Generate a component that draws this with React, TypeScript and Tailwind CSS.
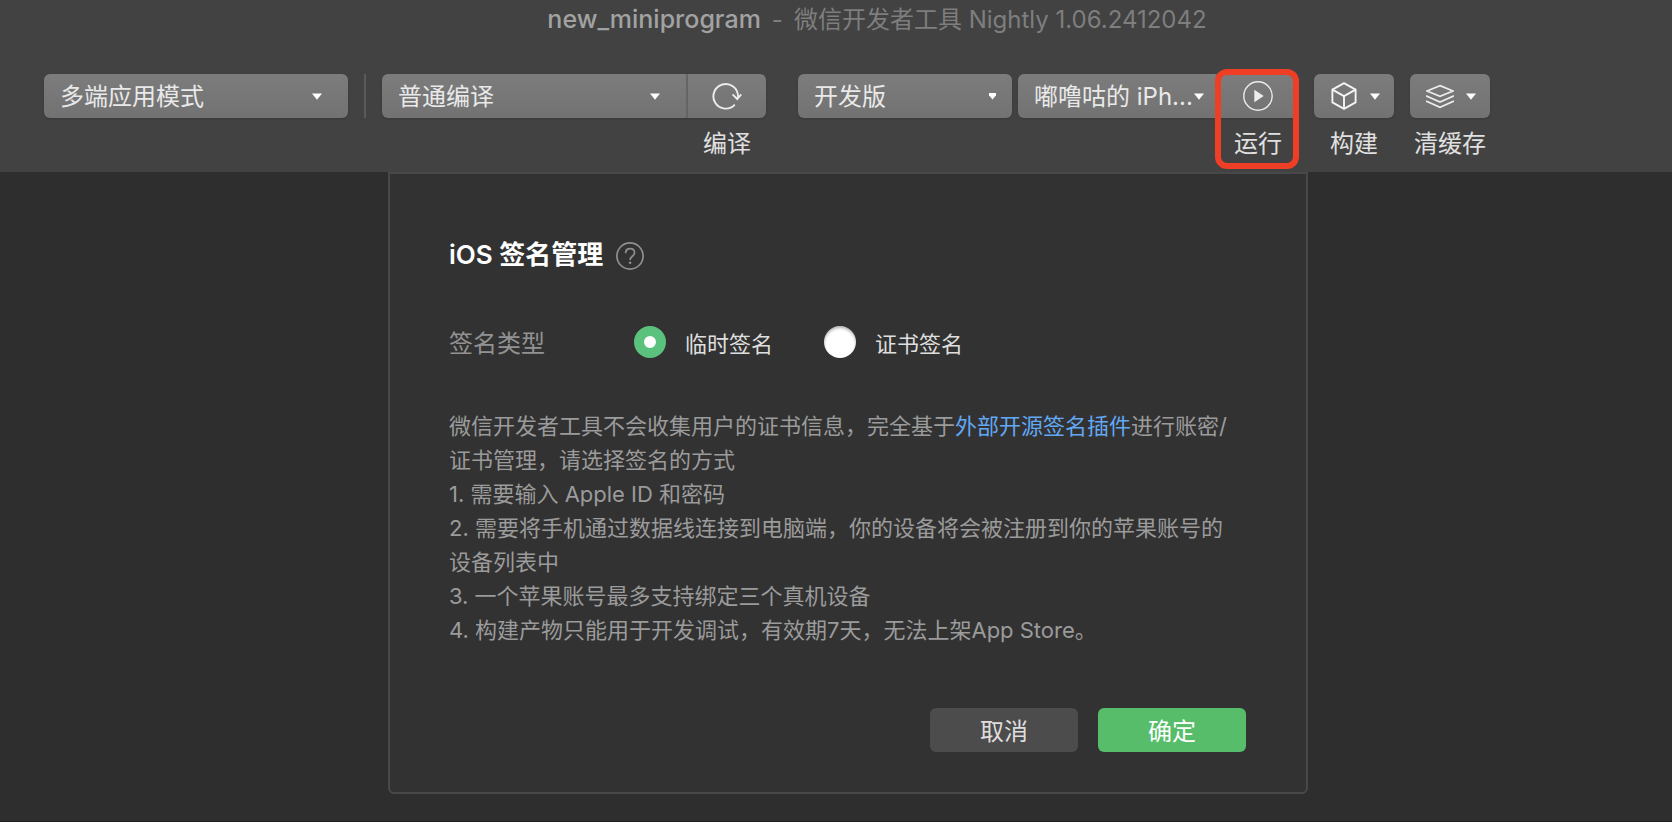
import { useState } from "react";
import type { ReactNode } from "react";

const fontStack = "font-['Inter','Noto_Sans_CJK_SC',sans-serif]";
const surface = "bg-linear-to-b from-[#7c7c7c] to-[#727272] text-[#e9e9e9]";

function Caret({ small = false }: { small?: boolean }) {
    return small ? (
        <svg viewBox="0 0 7 7" className="h-[7px] w-[7px] shrink-0" fill="#fff" aria-hidden="true">
            <path d="M0 0h7v2.2L3.5 6.6 0 2.2z" />
        </svg>
    ) : (
        <svg viewBox="0 0 10 7" className="h-[7px] w-2.5 shrink-0" fill="#fff" aria-hidden="true">
            <path d="M0 .4h10L5 6.8z" />
        </svg>
    );
}

function RefreshIcon() {
    return (
        <svg viewBox="0 0 30 28" className="h-7 w-[30px]" fill="none" stroke="#ececec" strokeWidth="1.9" aria-hidden="true">
            <path d="M22.8 22.6A12.3 12.3 0 1 1 26 14.4V16" />
            <path d="M20.6 12.4 25.2 17l4-4.6" />
        </svg>
    );
}

function PlayIcon() {
    return (
        <svg viewBox="0 0 30 30" className="size-[30px]" aria-hidden="true">
            <circle cx="15" cy="15" r="14.2" fill="none" stroke="#ececec" strokeWidth="1.4" />
            <path d="M11.3 8.8v12.4l9.4-6.2z" fill="#ececec" />
        </svg>
    );
}

function CubeIcon() {
    return (
        <svg viewBox="0 0 28 28" className="size-7" fill="none" stroke="#f4f4f4" strokeWidth="1.9" strokeLinejoin="round" aria-hidden="true">
            <path d="M14 1.2 25.6 7.6v12.8L14 26.8 2.4 20.4V7.6z" />
            <path d="M2.4 7.6 14 14.2l11.6-6.6M14 14.2v12.6" />
        </svg>
    );
}

function LayersIcon() {
    return (
        <svg viewBox="0 0 28 28" className="size-7" fill="none" stroke="#ececec" strokeWidth="1.7" aria-hidden="true">
            <path d="M14 3.6 27 9l-13 5.4L1 9z" />
            <path d="M0 13.9 14 20l14-6.1M0 19.1l14 6.1 14-6.1" />
        </svg>
    );
}

function Dropdown({ label, value, className, caretClass = "mr-[26px]", smallCaret = false }: {
    label: string;
    value: string;
    className: string;
    caretClass?: string;
    smallCaret?: boolean;
}) {
    return (
        <div className={`grid h-11 items-center shadow-sm ${surface} ${className}`}>
            <select
                aria-label={label}
                defaultValue={value}
                className="col-start-1 row-start-1 h-11 w-full appearance-none bg-transparent pt-0.5 pl-4 text-2xl outline-none"
            >
                <option value={value}>{value}</option>
            </select>
            <span className={`pointer-events-none col-start-1 row-start-1 justify-self-end ${caretClass}`}>
                <Caret small={smallCaret} />
            </span>
        </div>
    );
}

function Tool({ label, className, children, highlighted = false }: {
    label: string;
    className: string;
    children: ReactNode;
    highlighted?: boolean;
}) {
    return (
        <div className="relative flex flex-col items-center gap-2.5">
            <button type="button" aria-label={label} className={`flex h-11 items-center justify-center shadow-sm ${surface} ${className}`}>
                {children}
            </button>
            <span className="text-2xl leading-8 text-[#e0e0e0]">{label}</span>
            {highlighted && (
                <span className="pointer-events-none absolute -top-[5px] -right-px -bottom-[9px] -left-[3px] rounded-xl border-6 border-[#ee3f26]" />
            )}
        </div>
    );
}

function SignOption({ label, value, current, onSelect }: {
    label: string;
    value: string;
    current: string;
    onSelect: (value: string) => void;
}) {
    return (
        <label className="flex items-center gap-[19px] text-[22px] text-[#dfdfdf]">
            <input
                type="radio"
                name="sign-type"
                value={value}
                checked={current === value}
                onChange={() => onSelect(value)}
                className="size-8 appearance-none rounded-full bg-white shadow-[inset_0_2px_3px_rgba(0,0,0,0.3)] checked:border-10 checked:border-[#5bc27e] checked:shadow-none"
            />
            <span className="pt-1">{label}</span>
        </label>
    );
}

export default function App() {
    const [signType, setSignType] = useState("temp");

    return (
        <div className={`flex min-h-screen flex-col border-b border-[#1f1f1f] bg-[#2e2e2e] ${fontStack}`}>
            <header className="bg-[#424242] pb-3">
                <h1 className="flex h-10 items-center justify-center gap-[11px] pl-[82px] text-2xl text-[#7e7e7e]">
                    <span className="text-[25px] font-medium text-[#a2a2a2]">new_miniprogram</span>
                    <span>-</span>
                    <span>微信开发者工具 Nightly 1.06.2412042</span>
                </h1>
                <div className="flex items-start pt-[34px] pl-11">
                    <Dropdown label="应用模式" value="多端应用模式" className="w-76 rounded-md" />
                    <div className="mx-4 h-11 w-0.5 bg-[#5a5a5a]" />
                    <Dropdown label="编译模式" value="普通编译" className="w-[306px] rounded-l-md border-r-2 border-[#686868]" />
                    <Tool label="编译" className="w-[78px] rounded-r-md">
                        <RefreshIcon />
                    </Tool>
                    <Dropdown label="版本" value="开发版" className="ml-8 w-[214px] rounded-md" caretClass="mr-4" smallCaret />
                    <Dropdown label="设备" value="嘟噜咕的 iPh..." className="ml-1.5 w-[200px] rounded-l-md border-r-2 border-[#686868]" caretClass="mr-3" />
                    <Tool label="运行" className="w-20 rounded-r-md" highlighted>
                        <PlayIcon />
                    </Tool>
                    <div className="ml-4 flex gap-4">
                        <Tool label="构建" className="w-20 gap-3 rounded-md pl-0.5">
                            <CubeIcon />
                            <Caret />
                        </Tool>
                        <Tool label="清缓存" className="w-20 gap-3 rounded-md pl-0.5">
                            <LayersIcon />
                            <Caret />
                        </Tool>
                    </div>
                </div>
            </header>

            <main className="flex justify-center pl-6">
                <section
                    aria-labelledby="sign-title"
                    className="w-full max-w-[920px] rounded-b-md border-2 border-[#484848] bg-[#323232] pt-16 pr-[60px] pb-10 pl-[59px]"
                >
                    <div className="flex h-9 items-center gap-[13px]">
                        <h2 id="sign-title" className="pb-0.5 text-[26px] leading-9 font-semibold text-white">iOS 签名管理</h2>
                        <button type="button" aria-label="帮助" className="text-[#8f8f8f]">
                            <svg viewBox="0 0 28 28" className="size-7" fill="none" stroke="currentColor" strokeWidth="1.7" aria-hidden="true">
                                <circle cx="14" cy="14" r="13.1" />
                                <path d="M9.6 11.2c0-2.7 1.9-4.5 4.5-4.5s4.4 1.7 4.4 4c0 3.5-4.4 3.6-4.4 7.3" />
                                <circle cx="14.1" cy="20.8" r="1.3" fill="currentColor" stroke="none" />
                            </svg>
                        </button>
                    </div>

                    <fieldset className="mt-[50px] flex h-9 items-center">
                        <legend className="float-left w-[185px] pt-1 text-2xl leading-9 text-[#929292]">签名类型</legend>
                        <div className="flex gap-[51px]">
                            <SignOption label="临时签名" value="temp" current={signType} onSelect={setSignType} />
                            <SignOption label="证书签名" value="cert" current={signType} onSelect={setSignType} />
                        </div>
                    </fieldset>

                    <div className="mt-[49px] pr-2.5 text-[22px] leading-[34px] text-[#9b9b9b]">
                        <p>
                            微信开发者工具不会收集用户的证书信息，完全基于
                            <a href="#" className="text-[#62a8f5]">外部开源签名插件</a>
                            进行账密/证书管理，请选择签名的方式
                        </p>
                        <p>1. 需要输入 Apple ID 和密码</p>
                        <p>2. 需要将手机通过数据线连接到电脑端，你的设备将会被注册到你的苹果账号的设备列表中</p>
                        <p>3. 一个苹果账号最多支持绑定三个真机设备</p>
                        <p>4. 构建产物只能用于开发调试，有效期7天，无法上架App Store。</p>
                    </div>

                    <div className="mt-[61px] flex justify-end gap-5 text-2xl">
                        <button type="button" className="h-11 w-37 rounded-md bg-[#4c4c4c] pt-1 text-[#dedede]">取消</button>
                        <button type="button" className="h-11 w-37 rounded-md bg-[#58bd6b] pt-1 text-white">确定</button>
                    </div>
                </section>
            </main>
        </div>
    );
}
